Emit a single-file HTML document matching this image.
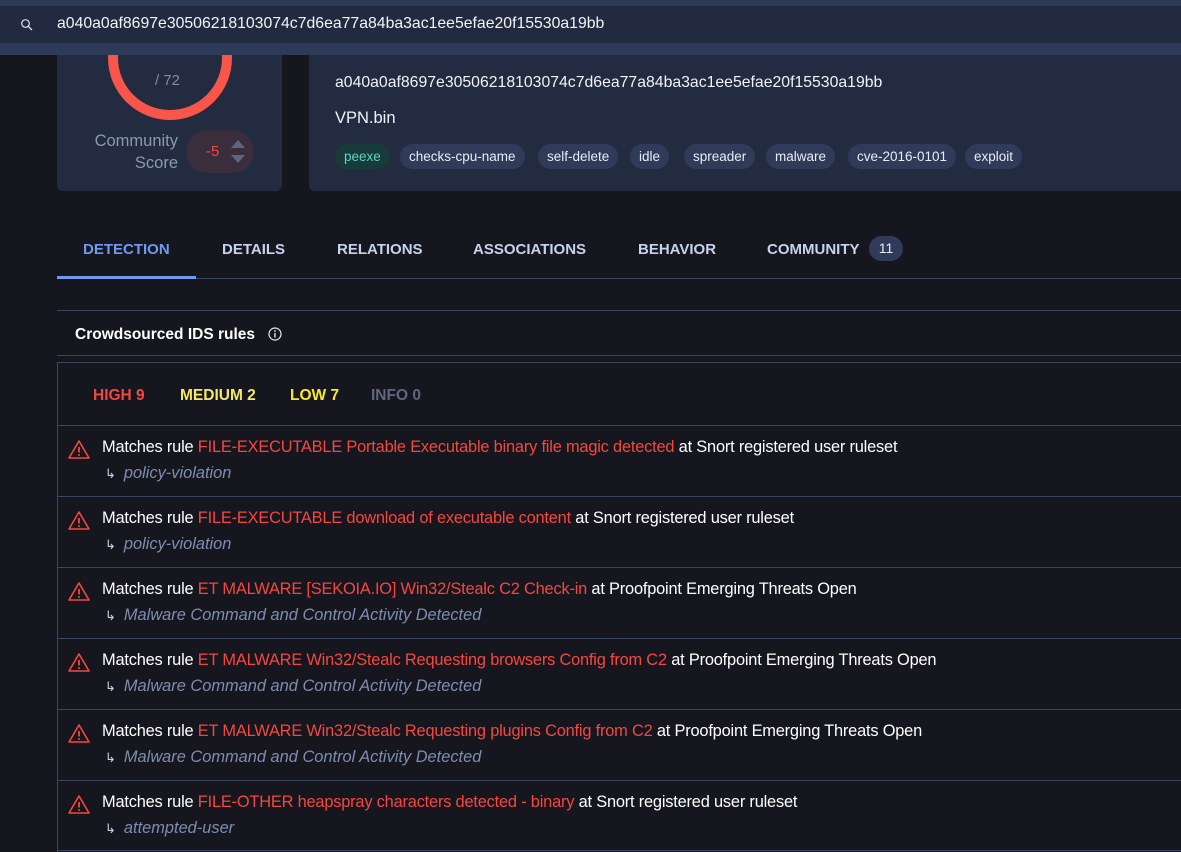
<!DOCTYPE html>
<html><head><meta charset="utf-8"><style>
*{margin:0;padding:0;box-sizing:border-box}
body{width:1181px;height:852px;overflow:hidden;background:#16161f;font-family:"Liberation Sans",sans-serif;color:#fff;position:relative}
.a{position:absolute;white-space:nowrap}
.tag{position:absolute;top:144px;height:25px;line-height:25px;border-radius:13px;background:#2f3b58;color:#e8ecf5;font-size:13.5px;padding:0 9px}
.tab{position:absolute;top:241px;font-size:15px;font-weight:bold;color:#c7d3ec;letter-spacing:0}
.hl{position:absolute;left:57px;right:0;height:1px;background:#3a4562}
.row{position:absolute;left:57px;right:0;height:71px;border-top:1px solid #3a4562}
.row .t{position:absolute;left:45px;top:12px;font-size:16.4px;white-space:nowrap;letter-spacing:-0.2px}
.row .t b{font-weight:normal;color:#f5473f}
.row .s{position:absolute;left:45px;top:38px;font-size:16.4px;font-style:italic;color:#7e8db0;white-space:nowrap}
.row .s i{font-style:normal;color:#c8d0e0;margin-right:8px;margin-left:3px;font-size:13px}
.row svg{position:absolute;left:11px;top:13px}
</style></head><body>
<!-- left card -->
<div class="a" style="left:57px;top:40px;width:225px;height:151px;background:#222b40;border-radius:6px"></div>
<svg class="a" style="left:100px;top:-10px" width="140" height="140"><circle cx="70" cy="68" r="57" fill="none" stroke="#f9564b" stroke-width="10"/></svg>
<div class="a" style="left:155px;top:72px;font-size:15px;color:#7e8aa6">/ 72</div>
<div class="a" style="left:70px;top:130px;width:108px;text-align:right;font-size:16.5px;color:#8c98b4;line-height:22px;white-space:normal">Community Score</div>
<div class="a" style="left:186px;top:130px;width:68px;height:43px;border-radius:22px;background:#3a2d3c"></div>
<div class="a" style="left:206px;top:143px;font-size:15px;color:#f5473f">-5</div>
<div class="a" style="left:231px;top:140px;width:0;height:0;border-left:7px solid transparent;border-right:7px solid transparent;border-bottom:8px solid #5d6680"></div>
<div class="a" style="left:231px;top:155px;width:0;height:0;border-left:7px solid transparent;border-right:7px solid transparent;border-top:8px solid #5d6680"></div>
<!-- right card -->
<div class="a" style="left:309px;top:40px;width:880px;height:151px;background:#222b40;border-radius:6px"></div>
<div class="a" style="left:335px;top:74px;font-size:15.8px;color:#f0f3f8">a040a0af8697e30506218103074c7d6ea77a84ba3ac1ee5efae20f15530a19bb</div>
<div class="a" style="left:335px;top:109px;font-size:16.5px;color:#f0f3f8">VPN.bin</div>
<div class="tag" style="left:335px;background:#173a3a;color:#5fd3c4">peexe</div>
<div class="tag" style="left:400px">checks-cpu-name</div>
<div class="tag" style="left:538px">self-delete</div>
<div class="tag" style="left:630px">idle</div>
<div class="tag" style="left:684px">spreader</div>
<div class="tag" style="left:766px">malware</div>
<div class="tag" style="left:848px">cve-2016-0101</div>
<div class="tag" style="left:965px">exploit</div>
<!-- header -->
<div class="a" style="left:0;top:0;width:1181px;height:55px;background:#2d3a58"></div>
<div class="a" style="left:0;top:6px;width:1181px;height:37px;background:#222a3f"></div>
<svg class="a" style="left:20px;top:18px" width="14" height="14"><circle cx="5.5" cy="5.5" r="3.8" fill="none" stroke="#dfe4ee" stroke-width="1.2"/><line x1="8.3" y1="8.3" x2="12" y2="12" stroke="#dfe4ee" stroke-width="1.3"/></svg>
<div class="a" style="left:57px;top:15px;font-size:15.8px;color:#f2f4f8">a040a0af8697e30506218103074c7d6ea77a84ba3ac1ee5efae20f15530a19bb</div>
<!-- tabs -->
<div class="tab" style="left:83px;color:#6e9bf0">DETECTION</div>
<div class="tab" style="left:222px">DETAILS</div>
<div class="tab" style="left:337px">RELATIONS</div>
<div class="tab" style="left:473px">ASSOCIATIONS</div>
<div class="tab" style="left:638px">BEHAVIOR</div>
<div class="tab" style="left:767px">COMMUNITY</div>
<div class="a" style="left:869px;top:236px;width:34px;height:25px;border-radius:13px;background:#2f3b58;font-size:14px;line-height:25px;text-align:center;color:#e8ecf5">11</div>
<div class="hl" style="top:278px;background:#3a4562"></div>
<div class="a" style="left:57px;top:276px;width:139px;height:3px;background:#6e9bf0"></div>
<div class="hl" style="top:310px"></div>
<div class="a" style="left:75px;top:326px;font-size:15.5px;font-weight:bold">Crowdsourced IDS rules</div>
<svg class="a" style="left:268px;top:327px" width="14" height="14"><circle cx="7" cy="7" r="6" fill="none" stroke="#e5e8ef" stroke-width="1.2"/><line x1="7" y1="6" x2="7" y2="10.5" stroke="#e5e8ef" stroke-width="1.4"/><circle cx="7" cy="4" r="0.9" fill="#e5e8ef"/></svg>
<div class="hl" style="top:355px"></div>
<div class="a" style="left:57px;top:362px;width:1px;height:490px;background:#3a4562"></div>
<div class="hl" style="top:362px"></div>
<div class="a" style="left:93px;top:387px;font-size:15.5px;font-weight:bold;color:#f5473f">HIGH 9</div>
<div class="a" style="left:180px;top:387px;font-size:15.5px;font-weight:bold;color:#f2e96a">MEDIUM 2</div>
<div class="a" style="left:290px;top:387px;font-size:15.5px;font-weight:bold;color:#f7ea2a">LOW 7</div>
<div class="a" style="left:371px;top:387px;font-size:15.5px;font-weight:bold;color:#5e6680">INFO 0</div>

<div class="row" style="top:425px"><svg width="22" height="20"><path d="M11 2 L21 19 L1 19 Z" fill="none" stroke="#f5473f" stroke-width="1.6" stroke-linejoin="round"/><line x1="11" y1="8" x2="11" y2="13.5" stroke="#f5473f" stroke-width="1.8"/><circle cx="11" cy="16" r="1" fill="#f5473f"/></svg><div class="t">Matches rule <b>FILE-EXECUTABLE Portable Executable binary file magic detected</b> at Snort registered user ruleset</div><div class="s"><i>↳</i>policy-violation</div></div>
<div class="row" style="top:496px"><svg width="22" height="20"><path d="M11 2 L21 19 L1 19 Z" fill="none" stroke="#f5473f" stroke-width="1.6" stroke-linejoin="round"/><line x1="11" y1="8" x2="11" y2="13.5" stroke="#f5473f" stroke-width="1.8"/><circle cx="11" cy="16" r="1" fill="#f5473f"/></svg><div class="t">Matches rule <b>FILE-EXECUTABLE download of executable content</b> at Snort registered user ruleset</div><div class="s"><i>↳</i>policy-violation</div></div>
<div class="row" style="top:567px"><svg width="22" height="20"><path d="M11 2 L21 19 L1 19 Z" fill="none" stroke="#f5473f" stroke-width="1.6" stroke-linejoin="round"/><line x1="11" y1="8" x2="11" y2="13.5" stroke="#f5473f" stroke-width="1.8"/><circle cx="11" cy="16" r="1" fill="#f5473f"/></svg><div class="t">Matches rule <b>ET MALWARE [SEKOIA.IO] Win32/Stealc C2 Check-in</b> at Proofpoint Emerging Threats Open</div><div class="s"><i>↳</i>Malware Command and Control Activity Detected</div></div>
<div class="row" style="top:638px"><svg width="22" height="20"><path d="M11 2 L21 19 L1 19 Z" fill="none" stroke="#f5473f" stroke-width="1.6" stroke-linejoin="round"/><line x1="11" y1="8" x2="11" y2="13.5" stroke="#f5473f" stroke-width="1.8"/><circle cx="11" cy="16" r="1" fill="#f5473f"/></svg><div class="t">Matches rule <b>ET MALWARE Win32/Stealc Requesting browsers Config from C2</b> at Proofpoint Emerging Threats Open</div><div class="s"><i>↳</i>Malware Command and Control Activity Detected</div></div>
<div class="row" style="top:709px"><svg width="22" height="20"><path d="M11 2 L21 19 L1 19 Z" fill="none" stroke="#f5473f" stroke-width="1.6" stroke-linejoin="round"/><line x1="11" y1="8" x2="11" y2="13.5" stroke="#f5473f" stroke-width="1.8"/><circle cx="11" cy="16" r="1" fill="#f5473f"/></svg><div class="t">Matches rule <b>ET MALWARE Win32/Stealc Requesting plugins Config from C2</b> at Proofpoint Emerging Threats Open</div><div class="s"><i>↳</i>Malware Command and Control Activity Detected</div></div>
<div class="row" style="top:780px"><svg width="22" height="20"><path d="M11 2 L21 19 L1 19 Z" fill="none" stroke="#f5473f" stroke-width="1.6" stroke-linejoin="round"/><line x1="11" y1="8" x2="11" y2="13.5" stroke="#f5473f" stroke-width="1.8"/><circle cx="11" cy="16" r="1" fill="#f5473f"/></svg><div class="t">Matches rule <b>FILE-OTHER heapspray characters detected - binary</b> at Snort registered user ruleset</div><div class="s"><i>↳</i>attempted-user</div></div>
<div class="hl" style="top:850px"></div>
</body></html>
